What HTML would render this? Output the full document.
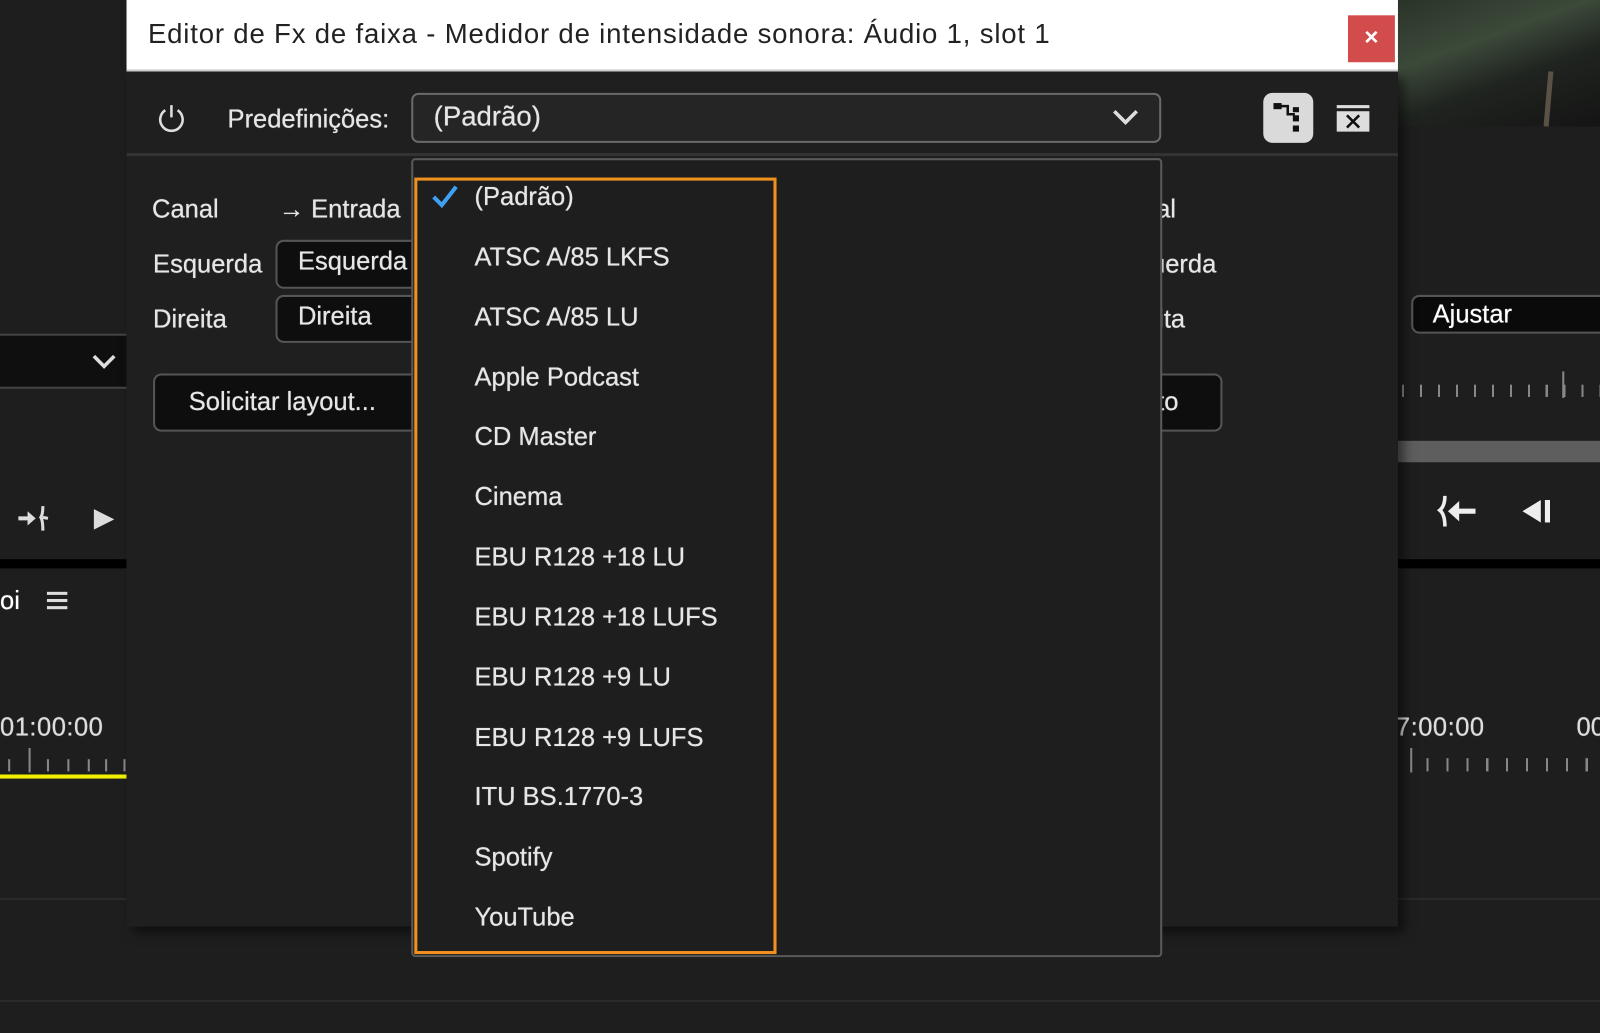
<!DOCTYPE html>
<html><head><meta charset="utf-8"><style>
html,body{margin:0;padding:0;background:#1e1e1e;overflow:hidden;width:1600px;height:1033px}
#w{position:absolute;left:0;top:0;width:1568px;height:1012px;transform:scale(1.020408);transform-origin:0 0;background:#1e1e1e;font-family:"Liberation Sans",sans-serif;color:#e6e6e6}
.a{position:absolute}
.t{position:absolute;font-size:25px;white-space:nowrap;line-height:30px;letter-spacing:0;text-shadow:0 0 0.6px #fff}
.box{position:absolute;background:#0e0e0e;border:2px solid #555;border-radius:6px;box-sizing:border-box}
.tick{position:absolute;width:2px;background:#888}
</style></head><body><div id="w">

<!-- left panel -->
<div class="a" style="left:0;top:327px;width:124px;height:50px;background:#0f0f0f;border-top:2px solid #444;border-bottom:2px solid #444"></div>
<svg class="a" style="left:89px;top:345px" width="26" height="18"><path d="M3 4 L13 14 L23 4" stroke="#ddd" stroke-width="3.5" fill="none"/></svg>
<svg class="a" style="left:16px;top:494px" width="36" height="30"><path d="M2 14 H14" stroke="#ddd" stroke-width="4"/><path d="M11 7 L19 14 L11 21Z" fill="#ddd"/><path d="M26 2 Q26 10 24 13 Q26 16 26 26 M26 13 L31 14" stroke="#ddd" stroke-width="3" fill="none"/></svg>
<svg class="a" style="left:90px;top:497px" width="24" height="24"><path d="M2 2 L22 12 L2 22Z" fill="#ddd"/></svg>
<div class="a" style="left:0;top:548px;width:124px;height:9px;background:#000"></div>
<div class="t" style="left:0;top:574px;color:#fff">oi</div>
<div class="a" style="left:46px;top:580px;width:20px;height:3px;background:#ddd;box-shadow:0 7px 0 #ddd,0 14px 0 #ddd"></div>
<div class="t" style="left:0;top:698px;color:#ddd;letter-spacing:0.5px">01:00:00</div>
<div class="tick" style="left:28px;top:733px;height:24px"></div>
<div class="tick" style="left:8px;top:744px;height:12px"></div>
<div class="tick" style="left:46px;top:744px;height:12px"></div>
<div class="tick" style="left:66px;top:744px;height:12px"></div>
<div class="tick" style="left:86px;top:744px;height:12px"></div>
<div class="tick" style="left:103px;top:744px;height:12px"></div>
<div class="tick" style="left:121px;top:744px;height:12px"></div>
<div class="a" style="left:0;top:759px;width:124px;height:4px;background:#f0f000"></div>

<!-- right panel -->
<div class="a" style="left:1370px;top:0;width:198px;height:124px;background:linear-gradient(160deg,#2a3328 0%,#3c4a3a 35%,#202420 60%,#141414 100%)"></div>
<div class="a" style="left:1515px;top:70px;width:5px;height:54px;background:#5a5246;transform:rotate(5deg)"></div>
<div class="box" style="left:1383px;top:289px;width:200px;height:38px;border-radius:8px;background:#0a0a0a"></div>
<div class="t" style="left:1404px;top:293px;color:#fff">Ajustar</div>
<div class="tick" style="left:1531px;top:364px;height:26px"></div>
<div class="a" style="left:1374px;top:377px;width:194px;height:12px;background:repeating-linear-gradient(90deg,#888 0 2px,transparent 2px 17.6px)"></div>
<div class="a" style="left:1370px;top:432px;width:198px;height:21px;background:#5e5e5e"></div>
<svg class="a" style="left:1408px;top:484px" width="40" height="34"><path d="M8 2 Q8 12 3 16 Q8 20 8 32" stroke="#eee" stroke-width="3.5" fill="none"/><path d="M14 17 H38" stroke="#eee" stroke-width="5"/><path d="M22 7 L11 17 L22 27Z" fill="#eee"/></svg>
<svg class="a" style="left:1490px;top:488px" width="34" height="26"><path d="M2 13 L20 2 V24Z" fill="#eee"/><rect x="24" y="2" width="5" height="22" fill="#eee"/></svg>
<div class="a" style="left:1370px;top:548px;width:198px;height:9px;background:#000"></div>
<div class="t" style="left:1368px;top:698px;color:#ddd;letter-spacing:0.5px">7:00:00</div>
<div class="t" style="left:1545px;top:698px;color:#ddd">00</div>
<div class="tick" style="left:1382px;top:733px;height:24px"></div>
<div class="a" style="left:1398px;top:743px;width:170px;height:13px;background:repeating-linear-gradient(90deg,#888 0 2px,transparent 2px 19.5px)"></div>

<div class="a" style="left:0;top:880px;width:1568px;height:2px;background:#2a2a2a"></div>
<div class="a" style="left:0;top:980px;width:1568px;height:2px;background:#2a2a2a"></div>

<!-- dialog -->
<div class="a" style="left:124px;top:70px;width:1246px;height:838px;background:#1f1f1f;box-shadow:6px 6px 10px rgba(0,0,0,.5)"></div>
<div class="a" style="left:124px;top:0;width:1246px;height:70px;background:#fff;border-bottom:2px solid #ccc;box-sizing:border-box"></div>
<div class="t" style="left:145px;top:18px;color:#222;font-size:27px;letter-spacing:0.8px;text-shadow:none">Editor de Fx de faixa - Medidor de intensidade sonora: Áudio 1, slot 1</div>
<div class="a" style="left:1321px;top:15px;width:46px;height:46px;background:#d24c4c;color:#fff;font-size:24px;font-weight:bold;text-align:center;line-height:44px">×</div>
<div class="a" style="left:124px;top:150px;width:1246px;height:3px;background:#333"></div>

<svg class="a" style="left:152px;top:100px" width="32" height="32"><path d="M10 8 A11 11 0 1 0 22 8" stroke="#ddd" stroke-width="2.5" fill="none"/><path d="M16 3 V15" stroke="#ddd" stroke-width="2.5"/></svg>
<div class="t" style="left:223px;top:102px">Predefinições:</div>
<div class="box" style="left:403px;top:91px;width:735px;height:49px;background:#252525;border-color:#6a6a6a;border-radius:7px"></div>
<div class="t" style="left:425px;top:99px;font-size:27px">(Padrão)</div>
<svg class="a" style="left:1089px;top:105px" width="28" height="20"><path d="M3 4 L14 15 L25 4" stroke="#ddd" stroke-width="3.5" fill="none"/></svg>
<div class="a" style="left:1238px;top:91px;width:49px;height:49px;background:#dadada;border-radius:9px"></div>
<svg class="a" style="left:1238px;top:91px" width="49" height="49"><rect x="10" y="10" width="8" height="6" fill="#111"/><path d="M17 13 H24 V21 H31" stroke="#111" stroke-width="2.5" fill="none"/><rect x="29" y="14" width="6" height="5" fill="#111"/><rect x="29" y="22" width="6" height="6" fill="#111"/><rect x="29" y="32" width="6" height="6" fill="#111"/></svg>
<svg class="a" style="left:1309px;top:102px" width="34" height="30"><rect x="1" y="1" width="32" height="3" fill="#ddd"/><rect x="1" y="7" width="32" height="20" fill="#ddd"/><path d="M11 11 L23 23 M23 11 L11 23" stroke="#111" stroke-width="2.5"/></svg>

<div class="t" style="left:149px;top:190px">Canal</div>
<div class="t" style="left:273px;top:190px">→ Entrada</div>
<div class="t" style="left:150px;top:244px">Esquerda</div>
<div class="box" style="left:270px;top:235px;width:150px;height:48px;border-radius:8px"></div>
<div class="t" style="left:292px;top:241px">Esquerda</div>
<div class="t" style="left:150px;top:298px">Direita</div>
<div class="box" style="left:270px;top:289px;width:150px;height:47px;border-radius:8px"></div>
<div class="t" style="left:292px;top:295px">Direita</div>
<div class="box" style="left:150px;top:366px;width:1048px;height:57px;border-radius:8px;background:#0e0e0e"></div>
<div class="t" style="left:185px;top:379px">Solicitar layout...</div>
<div class="t" style="left:1133px;top:190px">al</div>
<div class="t" style="left:1128px;top:244px">uerda</div>
<div class="t" style="left:1135px;top:298px">ita</div>
<div class="t" style="left:1134px;top:379px">to</div>

<!-- menu -->
<div class="a" style="left:403px;top:155px;width:736px;height:783px;background:#1e1e1e;border:2px solid #5a5a5a;border-radius:4px;box-sizing:border-box"></div>
<div class="a" style="left:406px;top:174px;width:355px;height:761px;border:3px solid #f0901e;box-sizing:border-box"></div>
<svg class="a" style="left:422px;top:180px" width="28" height="26"><path d="M3 13 L11 21 L25 3" stroke="#3ea0f0" stroke-width="4" fill="none"/></svg>
<div class="t" style="left:465px;top:178px">(Padrão)</div>
<div class="t" style="left:465px;top:237px">ATSC A/85 LKFS</div>
<div class="t" style="left:465px;top:296px">ATSC A/85 LU</div>
<div class="t" style="left:465px;top:355px">Apple Podcast</div>
<div class="t" style="left:465px;top:413px">CD Master</div>
<div class="t" style="left:465px;top:472px">Cinema</div>
<div class="t" style="left:465px;top:531px">EBU R128 +18 LU</div>
<div class="t" style="left:465px;top:590px">EBU R128 +18 LUFS</div>
<div class="t" style="left:465px;top:649px">EBU R128 +9 LU</div>
<div class="t" style="left:465px;top:708px">EBU R128 +9 LUFS</div>
<div class="t" style="left:465px;top:766px">ITU BS.1770-3</div>
<div class="t" style="left:465px;top:825px">Spotify</div>
<div class="t" style="left:465px;top:884px">YouTube</div>

</div></body></html>
